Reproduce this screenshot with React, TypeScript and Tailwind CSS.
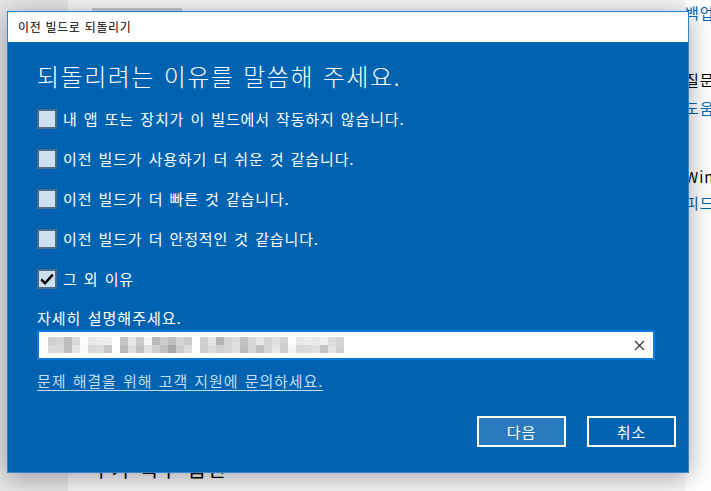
import React from "react";

const reasons = [
  { label: "내 앱 또는 장치가 이 빌드에서 작동하지 않습니다.", checked: false },
  { label: "이전 빌드가 사용하기 더 쉬운 것 같습니다.", checked: false },
  { label: "이전 빌드가 더 빠른 것 같습니다.", checked: false },
  { label: "이전 빌드가 더 안정적인 것 같습니다.", checked: false },
  { label: "그 외 이유", checked: true },
];

// pixelated (blurred) text cells, 8px each, two rows
const row1 = [
  "#cfcfcf", "#d4d4d4", "#bdbdbd", "#d9d9d9", "#fafafa", "#e8e8e8", "#ececec", "#eeeeee", "#ffffff",
  "#c4c4c4", "#e6e6e6", "#c9c9c9", "#f6f6f6", "#b9b9b9", "#cccccc", "#bfbfbf", "#d6d6d6", "#cbcbcb", "#ffffff",
  "#d0d0d0", "#e4e4e4", "#b3b3b3", "#d5d5d5", "#dedede", "#c2c2c2", "#d8d8d8", "#e6e6e6", "#d4d4d4", "#e0e0e0", "#d2d2d2", "#fafafa",
  "#e7e7e7", "#ececec", "#e8e8e8", "#f0f0f0", "#dcdcdc", "#d6d6d6",
];
const row2 = [
  "#d8d8d8", "#d8d8d8", "#bebebe", "#e4e4e4", "#f8f8f8", "#d8d8d8", "#dcdcdc", "#c8c8c8", "#ffffff",
  "#bababa", "#dedede", "#c2c2c2", "#e0e0e0", "#cfcfcf", "#c0c0c0", "#a9a9a9", "#cdcdcd", "#dddddd", "#ffffff",
  "#cfcfcf", "#dcdcdc", "#d0d0d0", "#d6d6d6", "#e0e0e0", "#bcbcbc", "#d4d4d4", "#c0c0c0", "#d6d6d6", "#e6e6e6", "#cfcfcf", "#f4f4f4",
  "#d9d9d9", "#d9d9d9", "#e0e0e0", "#c4c4c4", "#e3e3e3", "#d0d0d0",
];

function Checkbox({ checked }: { checked: boolean }) {
  return (
    <div className="w-[20px] h-[20px] shrink-0 bg-[#cde0f0] border-2 border-[#4d6a85] flex items-center justify-center">
      {checked && (
        <svg width="16" height="16" viewBox="0 0 16 16">
          <path d="M2.2 8.4 L6 12.2 L13.8 3.6" fill="none" stroke="#000" strokeWidth="2.4" />
        </svg>
      )}
    </div>
  );
}

export default function App() {
  return (
    <div className="relative w-[711px] h-[491px] overflow-hidden bg-white font-['Noto_Sans_CJK_KR','Noto_Sans',sans-serif]">
      {/* Background settings page */}
      <div className="flex h-full">
        <div className="w-[68px] h-full bg-[#e6e6e6] shrink-0" />
        <div className="w-[617px] shrink-0 flex flex-col pl-[24px] bg-[#f7f7f7]">
          <div className="mt-[8px] w-[90px] h-[6px] bg-[#c8c8c8]" />
          <div className="mt-[441px] text-[20px] leading-[28px] text-black tracking-[1.2px] [word-spacing:3px]">추가 복구 옵션</div>
        </div>
        <div className="flex-1 flex flex-col text-[15px] leading-[20px] whitespace-nowrap tracking-[1px]">
          <div className="mt-[3px] text-[#0067b8]">백업 파일</div>
          <div className="mt-[47px] text-black">질문이 있으신가요?</div>
          <div className="mt-[8px] text-[#0067b8]">도움말 보기</div>
          <div className="mt-[49px] text-black">Windows 개선</div>
          <div className="mt-[6px] text-[#0067b8]">피드백 보내기</div>
        </div>
      </div>

      {/* Dialog window */}
      <div className="absolute left-[7px] top-[11px] w-[682px] h-[462px] border border-[#2b86d6] bg-[#0063b1] flex flex-col shadow-[0_4px_24px_rgba(0,0,0,0.35)]">
        <div className="h-[30px] bg-white flex items-center pl-[10px] text-[12px] text-black shrink-0 tracking-[0.6px] [word-spacing:1px]">
          이전 빌드로 되돌리기
        </div>
        <div className="flex flex-col pl-[29px] pr-[12px] text-white">
          <div className="mt-[18px] text-[24px] leading-[32px] font-light tracking-[1.5px] [word-spacing:2px]">
            되돌리려는 이유를 말씀해 주세요.
          </div>
          <div className="mt-[7px] flex flex-col">
            {reasons.map((r) => (
              <div key={r.label} className="h-[40px] flex items-center gap-[6px]">
                <Checkbox checked={r.checked} />
                <span className="text-[15px] leading-[20px] tracking-[0.85px] [word-spacing:2px]">{r.label}</span>
              </div>
            ))}
          </div>
          <div className="mt-[9px] text-[15px] leading-[20px] tracking-[1px] [word-spacing:2px]">자세히 설명해주세요.</div>
          <div className="mt-[2px] w-[618px] h-[30px] border-2 border-[#0a7ad6] bg-white flex items-center pl-[9px] pr-[8px]">
            <div className="flex flex-col">
              <div className="flex">
                {row1.map((c, i) => (
                  <div key={i} className="w-[8px] h-[8px]" style={{ backgroundColor: c }} />
                ))}
              </div>
              <div className="flex">
                {row2.map((c, i) => (
                  <div key={i} className="w-[8px] h-[8px]" style={{ backgroundColor: c }} />
                ))}
              </div>
            </div>
            <div className="ml-auto w-[12px] h-[12px] flex items-center justify-center">
              <svg width="11" height="11" viewBox="0 0 11 11">
                <path d="M1 1 L10 10 M10 1 L1 10" stroke="#333" strokeWidth="1.1" />
              </svg>
            </div>
          </div>
          <div className="mt-[11px] self-start text-[15px] leading-[20px] text-[#c4def4] underline underline-offset-[3px] decoration-1 tracking-[0.9px] [word-spacing:2px]">
            문제 해결을 위해 고객 지원에 문의하세요.
          </div>
          <div className="mt-[25px] flex justify-end gap-[21px]">
            <button className="w-[89px] h-[31px] border-2 border-white bg-[#2a7abf] text-white text-[15px] leading-[20px] tracking-[1px]">
              다음
            </button>
            <button className="w-[89px] h-[31px] border-2 border-white bg-[#0063b1] text-white text-[15px] leading-[20px] tracking-[1px]">
              취소
            </button>
          </div>
        </div>
      </div>
    </div>
  );
}
